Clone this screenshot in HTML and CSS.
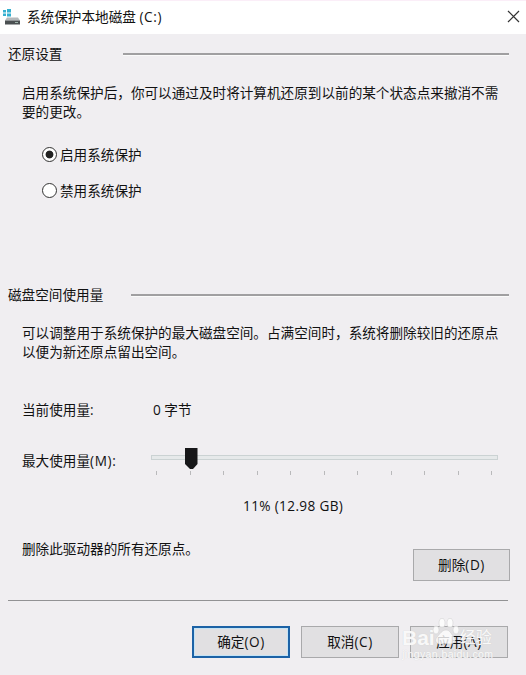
FILE: index.html
```html
<!DOCTYPE html>
<html lang="zh-CN">
<head>
  <meta charset="UTF-8">
  <title>系统保护本地磁盘 (C:)</title>
  <link rel="stylesheet" href="styles.css">
</head>
<body>
  <header class="titlebar">
    <svg class="disk-icon" width="18" height="18" viewBox="0 0 18 18">
      <path fill="#35b0d0" d="M0 2h3v2.5H0zM4 1h4v3.5H4zM0 5.5h3V8H0zM4 5.5h4v3H4z"/>
      <path fill="#b5b9bb" d="M4 9.5h11l2 3H2z"/>
      <path fill="#4b5052" d="M2 12.5h15v4H2z"/>
      <path fill="#9fb5ab" d="M12 14h3v1h-3z"/>
    </svg>
    <h1>系统保护本地磁盘 <span class="latin">(C:)</span></h1>
    <svg class="close" width="13" height="13" viewBox="0 0 13 13">
      <path d="M1 1l11 11M12 1L1 12" fill="none" stroke="#333" stroke-width="1.2"/>
    </svg>
  </header>

  <main>
    <section class="restore">
      <h2>还原设置</h2>
      <p>启用系统保护后，你可以通过及时将计算机还原到以前的某个状态点来撤消不需<br>要的更改。</p>
      <label class="radio"><input type="radio" name="protect" checked><span>启用系统保护</span></label>
      <label class="radio"><input type="radio" name="protect"><span>禁用系统保护</span></label>
    </section>

    <section class="usage">
      <h2>磁盘空间使用量</h2>
      <p>可以调整用于系统保护的最大磁盘空间。占满空间时，系统将删除较旧的还原点<br>以便为新还原点留出空间。</p>
      <div class="row current">
        <span class="name">当前使用量:</span>
        <span>0 字节</span>
      </div>
      <div class="row max">
        <span class="name">最大使用量<span class="latin">(M):</span></span>
        <div class="slider">
          <div class="track"></div>
          <svg class="thumb" width="13" height="22" viewBox="0 0 13 22">
            <path fill="#171719" d="M0 0h12.5v16L8 21H5l-5-5z"/>
          </svg>
          <div class="ticks">
            <i></i><i></i><i></i><i></i><i></i><i></i><i></i><i></i><i></i><i></i><i></i>
          </div>
        </div>
      </div>
      <div class="percent">11% (12.98 GB)</div>
      <div class="delete">
        <span>删除此驱动器的所有还原点。</span>
        <button>删除<span class="latin">(D)</span></button>
      </div>
    </section>
  </main>

  <footer>
    <button class="default">确定<span class="latin">(O)</span></button>
    <button>取消<span class="latin">(C)</span></button>
    <button>应用<span class="latin">(A)</span></button>
    <div class="watermark">
      <div class="brand">Bai<svg width="27" height="27" viewBox="0 0 27 27">
        <ellipse cx="4" cy="12" rx="3" ry="4"/>
        <ellipse cx="10" cy="5" rx="3" ry="4.5"/>
        <ellipse cx="18" cy="5" rx="3" ry="4.5"/>
        <ellipse cx="24" cy="12" rx="3" ry="4"/>
        <path d="M14 12c4 0 5 4 8 7 3 4 0 7-4 7-3 0-5-1-8 0-5 1-8-3-5-7 3-3 5-7 9-7z"/>
      </svg><span>经验</span></div>
      <div class="url">jingyan.baidu.com</div>
    </div>
  </footer>
</body>
</html>
```

FILE: styles.css
```css
* {
  box-sizing: border-box;
}
body {
  margin: 0;
  width: 526px;
  height: 675px;
  overflow: hidden;
  background: #f0eef1;
  color: #111;
  font: 13.62px/19px "Open Sans", "Noto Sans CJK SC", sans-serif;
}
h1, h2, p {
  margin: 0;
  font-size: inherit;
  font-weight: normal;
}
.latin {
  letter-spacing: 0.6px;
}
.titlebar {
  display: flex;
  align-items: center;
  height: 34px;
  padding: 0 6px 0 3px;
  background: #fff;
  border-top: 1px solid #fbeef8;
}
.titlebar h1 {
  flex: 1;
  margin: -2px 0 0 6px;
}
.disk-icon {
  margin-top: -1px;
}
.close {
  margin-top: -2px;
}
section {
  padding: 0 17px 0 8px;
}
.restore {
  height: 241px;
  padding-top: 10px;
}
h2 {
  display: flex;
  align-items: center;
  height: 19px;
}
h2::after {
  content: "";
  flex: 1;
  height: 2px;
  margin: 1px 0 0 61px;
  background: #a09fa1;
  border-bottom: 1px solid #fafafa;
}
.usage h2::after {
  margin-left: 28px;
}
p {
  margin: 20px 0 24px 14px;
  white-space: nowrap;
}
.radio {
  display: flex;
  align-items: center;
  height: 19px;
  margin: 0 0 17px 34px;
}
.radio input {
  appearance: none;
  width: 15px;
  height: 15px;
  margin: 0 3px 0 0;
  border: 1px solid #333;
  border-radius: 50%;
  background: #fff;
}
.radio input:checked {
  background: radial-gradient(circle, #222 3.5px, #fff 4.3px);
}
.usage {
  padding-top: 10px;
}
.usage p {
  margin: 19px 0 39px 14px;
}
.row {
  display: flex;
  margin-left: 14px;
}
.name {
  width: 129px;
  flex: none;
}
.current span + span {
  margin-left: 2px;
}
.max {
  height: 27px;
  margin-top: 32px;
}
.slider {
  position: relative;
  width: 347px;
  padding-top: 4px;
}
.track {
  height: 5px;
  background: #e6e9ea;
  border: 1px solid #cbd2d3;
}
.thumb {
  position: absolute;
  left: 34px;
  top: -3px;
}
.ticks {
  display: flex;
  justify-content: space-between;
  margin: 11px 6px 0 5px;
}
.ticks i {
  width: 1px;
  height: 4px;
  background: #b9b9bb;
}
.percent {
  margin: 18px 0 0 235px;
  letter-spacing: 0.35px;
}
.delete {
  display: flex;
  justify-content: space-between;
  margin: 24px -1px 0 14px;
}
button {
  width: 98px;
  height: 32px;
  padding: 0 0 2px;
  border: 1px solid #a9a9ab;
  background: #e1e0e2;
  color: inherit;
  font: inherit;
}
.delete button {
  width: 97px;
  margin-top: 10px;
}
footer {
  position: relative;
  display: flex;
  justify-content: flex-end;
  gap: 11px;
  margin: 19px 18px 0 8px;
  padding-top: 25px;
  border-top: 1px solid #929294;
}
.default {
  border: 2px solid #1c62a6;
  box-shadow: inset 0 0 0 1px #c4e3f5;
}
.watermark {
  position: absolute;
  left: 394px;
  top: 17px;
  color: rgba(255, 255, 255, 0.9);
  text-shadow: 0 0 1px #ccc;
}
.brand {
  display: flex;
  align-items: flex-end;
  height: 31px;
  font: bold 21px/22px "Liberation Sans", "Noto Sans CJK SC", sans-serif;
}
.brand svg {
  margin: 0 1px 4px -3px;
  fill: rgba(255, 255, 255, 0.8);
  stroke: #ccc;
  stroke-width: 0.5;
}
.brand span {
  font-size: 16px;
  font-weight: normal;
}
.url {
  margin-top: -1px;
  font: 10.5px/12px "Liberation Sans", sans-serif;
  letter-spacing: 0.4px;
}
```
